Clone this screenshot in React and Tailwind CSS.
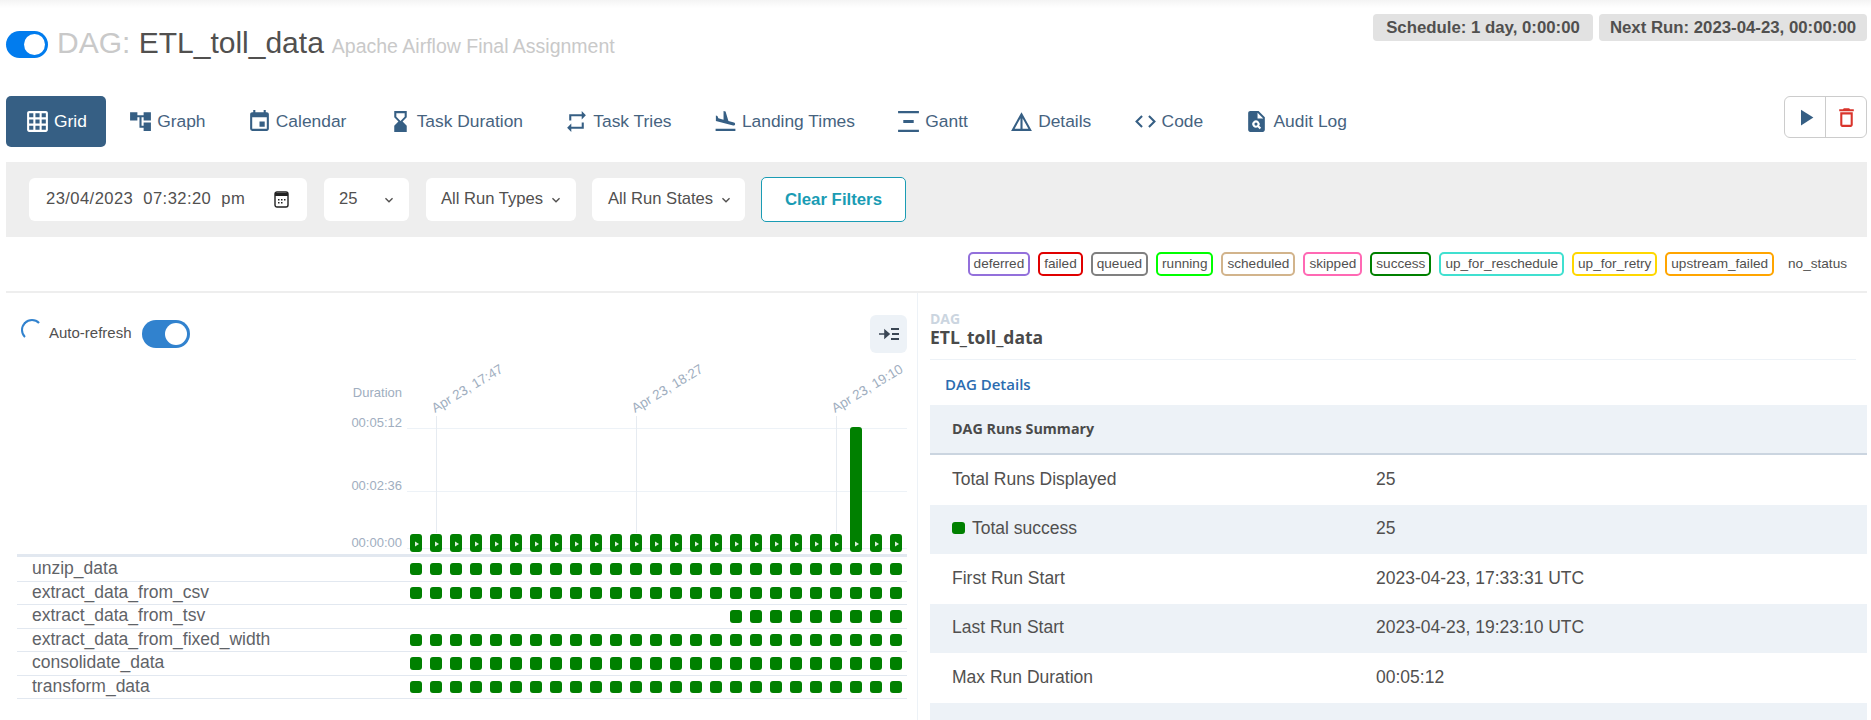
import React from "react";
import {
  MdGridOn, MdAccountTree, MdEvent, MdHourglassBottom, MdRepeat, MdFlightLand,
  MdVerticalDistribute, MdDetails, MdCode, MdPlagiarism, MdPlayArrow, MdDeleteOutline,
  MdKeyboardArrowDown,
} from "react-icons/md";

const NAV = [
  ["Grid", MdGridOn],
  ["Graph", MdAccountTree],
  ["Calendar", MdEvent],
  ["Task Duration", MdHourglassBottom],
  ["Task Tries", MdRepeat],
  ["Landing Times", MdFlightLand],
  ["Gantt", MdVerticalDistribute],
  ["Details", MdDetails],
  ["Code", MdCode],
  ["Audit Log", MdPlagiarism],
];

const LEGEND = [
  ["deferred", "border-[#9370db]"],
  ["failed", "border-[#e00000]"],
  ["queued", "border-[#808080]"],
  ["running", "border-[#00ff00]"],
  ["scheduled", "border-[#d2b48c]"],
  ["skipped", "border-[#ff69b4]"],
  ["success", "border-[#008000]"],
  ["up_for_reschedule", "border-[#40e0d0]"],
  ["up_for_retry", "border-[#ffd700]"],
  ["upstream_failed", "border-[#ffa500]"],
];

const ROWS = [
  ["unzip_data", "h-[25px]", 0],
  ["extract_data_from_csv", "h-[23px]", 0],
  ["extract_data_from_tsv", "h-[24px]", 16],
  ["extract_data_from_fixed_width", "h-[23px]", 0],
  ["consolidate_data", "h-[24px]", 0],
  ["transform_data", "h-[23px]", 0],
];

const SUMMARY = [
  ["Total Runs Displayed", "25"],
  ["Total success", "25", true],
  ["First Run Start", "2023-04-23, 17:33:31 UTC"],
  ["Last Run Start", "2023-04-23, 19:23:10 UTC"],
  ["Max Run Duration", "00:05:12"],
];

const COLS = Array.from({ length: 25 }, (_, i) => i);

function Select({ label, className }) {
  return (
    <div className={`h-[43px] bg-white rounded-[6px] flex items-center text-[16.6px] text-[#51504f] ${className}`}>
      <span>{label}</span>
      <MdKeyboardArrowDown size={16} className="text-[#51504f]" />
    </div>
  );
}

function Chart() {
  const ox = 17;
  const oy = 353;
  return (
    <svg width="890" height="201" className="block" style={{ fontFamily: '"Liberation Sans", Arial, sans-serif' }}>
      {[428, 491, 548].map((y) => (
        <line key={y} x1={407 - ox} x2={907 - ox} y1={y - oy + 0.5} y2={y - oy + 0.5} stroke="#edf2f7" />
      ))}
      {[436, 636, 836].map((x) => (
        <line key={x} x1={x - ox + 0.5} x2={x - ox + 0.5} y1={416 - oy} y2={533 - oy} stroke="#e6ebf1" />
      ))}
      <text x={402 - ox} y={397 - oy} textAnchor="end" fontSize="13" fill="#a0aec0">Duration</text>
      <text x={402 - ox} y={427 - oy} textAnchor="end" fontSize="13" fill="#a0aec0">00:05:12</text>
      <text x={402 - ox} y={490 - oy} textAnchor="end" fontSize="13" fill="#a0aec0">00:02:36</text>
      <text x={402 - ox} y={547 - oy} textAnchor="end" fontSize="13" fill="#a0aec0">00:00:00</text>
      {[["Apr 23, 17:47", 436], ["Apr 23, 18:27", 636], ["Apr 23, 19:10", 836]].map(([t, x]) => (
        <text key={t} transform={`translate(${x - ox - 1} ${413 - oy}) rotate(-31)`} fontSize="13.4" fill="#a0aec0">{t}</text>
      ))}
      {COLS.map((i) => {
        const x = 410 - ox + i * 20;
        const tall = i === 22;
        const top = tall ? 427 - oy : 534 - oy;
        return (
          <g key={i}>
            <rect x={x} y={top} width="12" height={552 - oy - top} rx="3" fill="#008000" />
            <path d={`M${x + 5} ${541.5 - oy}l4 2.5l-4 2.5z`} fill="#dcefdc" />
          </g>
        );
      })}
    </svg>
  );
}

export default function App() {
  return (
    <div className="relative w-full h-[720px] overflow-hidden bg-white text-[#51504f] font-['Liberation_Sans',Arial,sans-serif]">
      <div className="absolute top-0 left-0 right-0 h-[8px] bg-gradient-to-b from-[#f4f4f4] to-white" />
      <div className="pl-[6px] pr-[4px]">
        {/* Title */}
        <header className="relative flex justify-between items-start h-[96px]">
          <div className="flex items-start gap-[9px]">
            <div className="mt-[31px] w-[42px] h-[27px] rounded-full bg-[#017cee] flex items-center justify-end pr-[3px]">
              <div className="w-[21px] h-[21px] rounded-full bg-white" />
            </div>
            <h1 className="mt-[26px] text-[30px] leading-[34px] whitespace-nowrap">
              <span className="text-[#c9c9c9]">DAG: </span>
              <span className="text-[#51504f]">ETL_toll_data</span>
              <span className="text-[19.5px] text-[#c9c9c9] ml-[8px]">Apache Airflow Final Assignment</span>
            </h1>
          </div>
          <div className="flex gap-[6px] pt-[14px]">
            <span className="h-[27px] w-[220px] flex items-center justify-center rounded-[4px] bg-[#e2e2e2] font-bold text-[16.8px]">Schedule: 1 day, 0:00:00</span>
            <span className="h-[27px] w-[268px] flex items-center justify-center rounded-[4px] bg-[#e2e2e2] font-bold text-[16.8px]">Next Run: 2023-04-23, 00:00:00</span>
          </div>
        </header>

        {/* Nav */}
        <nav className="flex justify-between items-start h-[51px]">
          <ul className="flex gap-[3.3px]">
            {NAV.map(([label, Icon], i) => (
              <li
                key={label}
                className={`h-[51px] flex items-center gap-[3px] pl-[18px] pr-[19px] rounded-[5px] text-[17.4px] ${i === 0 ? "bg-[#365f84] text-white" : "text-[#46637f]"}`}
              >
                <span className="w-[27px] flex justify-center">
                  <Icon size={25} className={i === 0 ? "text-white" : "text-[#365f84]"} />
                </span>
                <span>{label}</span>
              </li>
            ))}
          </ul>
          <div className="flex h-[42px] w-[83px] rounded-[6px] border border-[#cccccc]">
            <div className="w-[41px] border-r border-[#cccccc] flex items-center justify-center">
              <MdPlayArrow size={27} className="text-[#365f84]" />
            </div>
            <div className="flex-1 flex items-center justify-center">
              <MdDeleteOutline size={25} className="text-[#d9342b]" />
            </div>
          </div>
        </nav>

        {/* Filters */}
        <div className="mt-[15px] h-[75px] bg-[#eeeeee] flex items-center pl-[23px]">
          <div className="h-[43px] w-[278px] bg-white rounded-[6px] flex items-center justify-between pl-[17px] pr-[18px] text-[16.6px] text-[#51504f]">
            <span className="tracking-[0.42px] whitespace-pre">23/04/2023  07:32:20  pm</span>
            <svg width="15" height="17" viewBox="0 0 15 17" className="text-[#222]">
              <rect x="1" y="1" width="13" height="15" rx="2" fill="none" stroke="currentColor" strokeWidth="1.4" />
              <rect x="1" y="2" width="13" height="3" fill="currentColor" />
              <path d="M4 8h1.5v1.5H4zM7 8h1.5v1.5H7zM10 8h1.5v1.5H10zM4 11h1.5v1.5H4zM7 11h1.5v1.5H7z" fill="currentColor" />
            </svg>
          </div>
          <Select label="25" className="ml-[17px] w-[85px] pl-[15px] justify-between pr-[12px]" />
          <Select label="All Run Types" className="ml-[17px] w-[150px] pl-[15px] justify-between pr-[12px]" />
          <Select label="All Run States" className="ml-[16px] w-[153px] pl-[16px] justify-between pr-[11px]" />
          <button className="ml-[16px] h-[45px] w-[145px] rounded-[5px] border border-[#1a9cb4] bg-white text-[#1a9cb4] font-bold text-[16.8px]">Clear Filters</button>
        </div>

        {/* Legend */}
        <div className="h-[54px] flex justify-end items-center gap-[8px] pr-[20px] text-[13.6px] text-[#51504f]">
          {LEGEND.map(([label, color]) => (
            <span key={label} className={`h-[24px] px-[4px] flex items-center rounded-[5px] border-2 ${color}`}>{label}</span>
          ))}
          <span className="ml-[6px]">no_status</span>
        </div>
        <div className="h-[2px] bg-[#eeeeee]" />

        {/* Main */}
        <div className="flex h-[427px]">
          <section className="w-[912px] shrink-0 border-r border-[#edf2f7] pl-[11px] pr-[10px]">
            <div className="h-[60px] pt-[22px] flex justify-between items-start">
              <div className="flex items-start">
                <div className="ml-[4px] mt-[4px] w-[22px] h-[22px] rounded-full border-2 border-t-[#3182ce] border-l-[#3182ce] border-r-transparent border-b-transparent" />
                <span className="ml-[6px] mt-[8px] text-[15px] leading-[20px]">Auto-refresh</span>
                <div className="ml-[10px] mt-[5px] w-[48px] h-[28px] rounded-full bg-[#3182ce] flex items-center justify-end pr-[3px]">
                  <div className="w-[22px] h-[22px] rounded-full bg-white" />
                </div>
              </div>
              <div className="w-[37px] h-[38px] rounded-[6px] bg-[#edf2f7] flex items-center justify-center">
                <svg width="20" height="14" viewBox="0 0 20 14" className="text-[#3a4654]">
                  <path d="M0 7h8M6 3.5L10 7l-4 3.5z" stroke="currentColor" strokeWidth="1.6" fill="currentColor" />
                  <path d="M12 2h8M13 7h7M12 12h8" stroke="currentColor" strokeWidth="1.8" fill="none" />
                </svg>
              </div>
            </div>
            <Chart />
            <div className="border-t-[3px] border-[#e2e8f0] w-[890px]">
              {ROWS.map(([name, h, from]) => (
                <div key={name} className={`flex items-center border-b border-[#e2e8f0] ${h}`}>
                  <span className="w-[393px] pl-[15px] -mt-[1px] text-[17.5px] leading-none text-[#5f6368]">{name}</span>
                  <div className="flex gap-[8px]">
                    {COLS.map((i) => (
                      <div key={i} className={`w-[12px] h-[12.5px] rounded-[3px] ${i >= from ? "bg-[#008000]" : "bg-transparent"}`} />
                    ))}
                  </div>
                </div>
              ))}
            </div>
          </section>

          <section className="flex-1 min-w-0 pl-[12px] pt-[18px]">
            <div className="font-['Open_Sans',sans-serif] mr-[11px] border-b border-[#edf2f7] h-[49px]">
              <div className="text-[14px] leading-[16px] font-bold text-[#cbd5e0]">DAG</div>
              <div className="text-[17.5px] leading-[21px] font-bold text-[#4a4a4a]">ETL_toll_data</div>
            </div>
            <div className="h-[45px] flex items-center pt-[4px] pl-[15px] font-['Open_Sans',sans-serif] font-semibold text-[15px] text-[#2b6cb0]">DAG Details</div>
            <div className="h-[50px] bg-[#edf2f7] border-b-2 border-[#cbd5e0] flex items-center pl-[22px] font-['Open_Sans',sans-serif] font-bold text-[14.3px] text-[#4a4a4a]">DAG Runs Summary</div>
            {SUMMARY.map(([k, v, dot], i) => (
              <div key={k} className={`h-[49.6px] flex items-center pl-[22px] pb-[2px] text-[17.5px] ${i % 2 ? "bg-[#edf2f7]" : "bg-white"}`}>
                <div className="w-[424px] flex items-center">
                  {dot && <span className="w-[13px] h-[12px] rounded-[3px] bg-[#008000] mr-[7px]" />}
                  <span>{k}</span>
                </div>
                <span>{v}</span>
              </div>
            ))}
            <div className="h-[40px] bg-[#edf2f7]" />
          </section>
        </div>
      </div>
    </div>
  );
}
